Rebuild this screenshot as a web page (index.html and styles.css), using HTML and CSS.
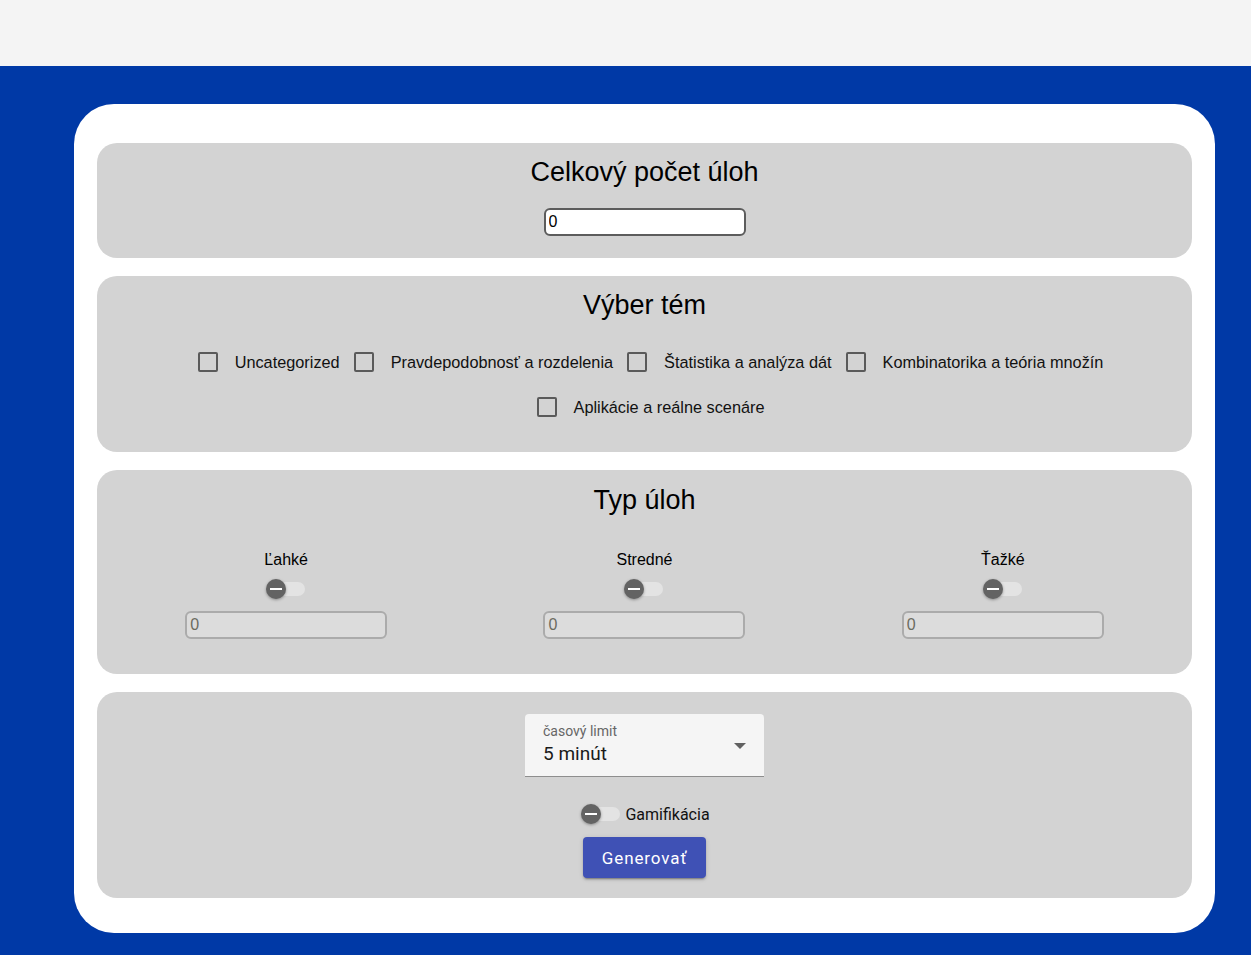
FILE: index.html
```html
<!DOCTYPE html>
<html lang="sk">
<head>
<meta charset="utf-8">
<title>Generátor úloh</title>
<link rel="stylesheet" href="styles.css">
</head>
<body>
<header class="topbar"></header>
<main class="stage">
  <div class="card">
    <section class="panel panel-count">
      <h2 class="panel-title">Celkový počet úloh</h2>
      <input class="num-input" type="text" value="0">
    </section>

    <section class="panel panel-topics">
      <h2 class="panel-title">Výber tém</h2>
      <div class="topics">
        <label class="topic"><span class="box"></span><span class="topic-text">Uncategorized</span></label>
        <label class="topic"><span class="box"></span><span class="topic-text">Pravdepodobnosť a rozdelenia</span></label>
        <label class="topic"><span class="box"></span><span class="topic-text">Štatistika a analýza dát</span></label>
        <label class="topic"><span class="box"></span><span class="topic-text">Kombinatorika a teória množín</span></label>
        <label class="topic"><span class="box"></span><span class="topic-text">Aplikácie a reálne scenáre</span></label>
      </div>
    </section>

    <section class="panel panel-types">
      <h2 class="panel-title">Typ úloh</h2>
      <div class="types">
        <div class="type">
          <div class="type-label">Ľahké</div>
          <span class="switch"><span class="track"></span><span class="thumb"><span class="minus"></span></span></span>
          <input class="num-input disabled" type="text" value="0" disabled>
        </div>
        <div class="type">
          <div class="type-label">Stredné</div>
          <span class="switch"><span class="track"></span><span class="thumb"><span class="minus"></span></span></span>
          <input class="num-input disabled" type="text" value="0" disabled>
        </div>
        <div class="type">
          <div class="type-label">Ťažké</div>
          <span class="switch"><span class="track"></span><span class="thumb"><span class="minus"></span></span></span>
          <input class="num-input disabled" type="text" value="0" disabled>
        </div>
      </div>
    </section>

    <section class="panel panel-settings">
      <div class="select">
        <div class="select-label">časový limit</div>
        <div class="select-value">5 minút</div>
        <svg class="select-arrow" width="12" height="6" viewBox="0 0 12 6"><path d="M0 0 L12 0 L6 6 Z" fill="#616161"/></svg>
      </div>
      <div class="gamif">
        <span class="switch"><span class="track"></span><span class="thumb"><span class="minus"></span></span></span>
        <span class="gamif-text">Gamifikácia</span>
      </div>
      <button class="btn" type="button">Generovať</button>
    </section>
  </div>
</main>
</body>
</html>
```

FILE: styles.css
```css
* { box-sizing: border-box; }

html, body {
  margin: 0;
  padding: 0;
}

body {
  font-family: "Liberation Sans", Arial, sans-serif;
  color: #000;
  background: #0039a6;
}

.topbar {
  height: 66px;
  background: #f4f4f4;
}

.stage {
  background: #0039a6;
  padding: 38px 36px 22px 74px;
  min-height: 889px;
}

.card {
  background: #fff;
  border-radius: 40px;
  padding: 39px 23px 35px 23px;
  display: flex;
  flex-direction: column;
  gap: 18px;
}

.panel {
  background: #d3d3d3;
  border-radius: 20px;
  display: flex;
  flex-direction: column;
  align-items: center;
}

.panel-title {
  margin: 0;
  font-size: 27px;
  line-height: 30px;
  font-weight: normal;
}

.panel-count {
  padding: 14px 0 22px;
}

.panel-count .num-input {
  margin-top: 21px;
}

.num-input {
  width: 202px;
  height: 28px;
  border: 2px solid #5c5c5c;
  border-radius: 6px;
  background: #fff;
  font-family: "Liberation Sans", Arial, sans-serif;
  font-size: 16px;
  color: #000;
  padding: 0 3px;
  outline: none;
}

.num-input.disabled {
  background: #dcdcdc;
  border-color: #ababab;
  color: #6b6b5f;
  height: 28px;
}

/* topics */
.panel-topics {
  padding: 14px 0 24px;
}

.topics {
  margin-top: 21px;
  display: flex;
  flex-wrap: wrap;
  justify-content: center;
  column-gap: 14px;
  row-gap: 3px;
  padding-left: 12px;
  width: 100%;
}

.topic {
  display: flex;
  align-items: center;
  height: 42px;
  font-size: 16.3px;
  color: #111;
}

.box {
  width: 20px;
  height: 20px;
  border: 2px solid #5a5a5a;
  border-radius: 2px;
  margin-right: 17px;
  flex: none;
}

/* types */
.panel-types {
  padding: 15px 10px 35px;
}

.types {
  margin-top: 35px;
  width: 100%;
  display: grid;
  grid-template-columns: repeat(3, 1fr);
}

.type {
  display: flex;
  flex-direction: column;
  align-items: center;
}

.type-label {
  font-size: 16px;
  line-height: 20px;
}

.type .switch {
  margin-top: 9px;
}

.type .num-input {
  margin-top: 12px;
}

/* switch */
.switch {
  position: relative;
  display: inline-block;
  width: 40px;
  height: 20px;
  flex: none;
}

.track {
  position: absolute;
  left: 10px;
  top: 3px;
  width: 29px;
  height: 14px;
  border-radius: 7px;
  background: #e3e3e3;
}

.thumb {
  position: absolute;
  left: 0;
  top: 0;
  width: 20px;
  height: 20px;
  border-radius: 50%;
  background: #636363;
  box-shadow: 0 1px 3px rgba(0,0,0,0.35);
  display: flex;
  align-items: center;
  justify-content: center;
}

.minus {
  width: 12px;
  height: 2px;
  background: #fff;
}

/* settings */
.panel-settings {
  padding: 22px 0 20px;
}

.select {
  position: relative;
  width: 239px;
  height: 63px;
  background: #f5f5f5;
  border-radius: 4px 4px 0 0;
  border-bottom: 1px solid #8e8e8e;
  padding: 9px 18px 0;
  font-family: Roboto, "Liberation Sans", sans-serif;
}

.select-label {
  font-size: 14px;
  line-height: 16px;
  color: #666;
}

.select-value {
  margin-top: 4px;
  font-size: 19px;
  line-height: 22px;
  color: #1a1a1a;
}

.select-arrow {
  position: absolute;
  right: 18px;
  top: 29px;
}

.gamif {
  margin-top: 27px;
  display: flex;
  align-items: center;
  gap: 4px;
  margin-left: 2px;
  font-family: Roboto, "Liberation Sans", sans-serif;
}

.gamif-text {
  font-size: 16px;
  color: #111;
}

.btn {
  margin-top: 13px;
  width: 123px;
  height: 41px;
  border: none;
  border-radius: 4px;
  background: #3f51b5;
  color: #fff;
  font-family: Roboto, "Liberation Sans", sans-serif;
  font-size: 17px;
  letter-spacing: 0.9px;
  box-shadow: 0 3px 1px -2px rgba(0,0,0,0.2), 0 2px 2px 0 rgba(0,0,0,0.14), 0 1px 5px 0 rgba(0,0,0,0.12);
  cursor: pointer;
}
```
